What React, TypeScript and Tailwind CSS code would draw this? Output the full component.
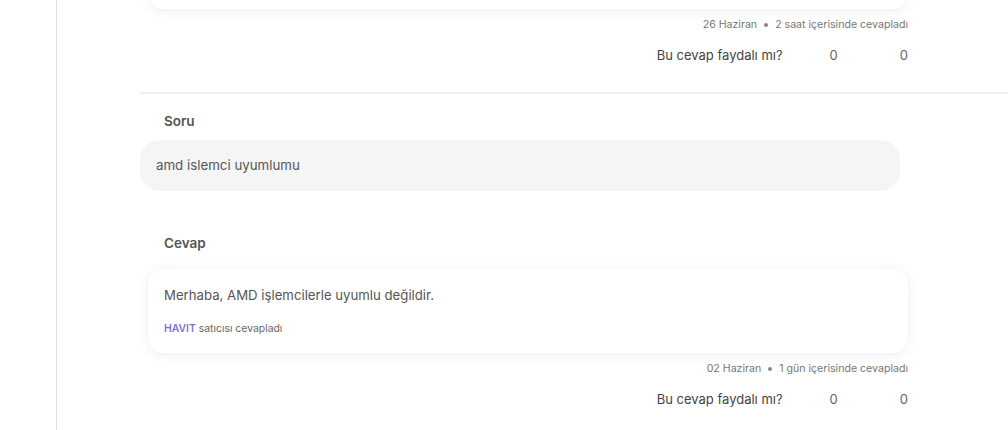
function DateLine({ date, text }: { date: string; text: string }) {
  return (
    <div className="mt-[8px] flex items-center justify-end text-[10.6px] leading-[16px] text-[#777]">
      <span>{date}</span>
      <span className="mx-[7px] inline-block h-[4px] w-[4px] rounded-full bg-[#888]" />
      <span>{text}</span>
    </div>
  );
}

function Helpful() {
  return (
    <div className="mt-[12px] flex items-center justify-end text-[13px] leading-[20px] text-[#444]">
      <span>Bu cevap faydalı mı?</span>
      <span className="ml-[47px] text-[#666]">0</span>
      <span className="ml-[62px] text-[#666]">0</span>
    </div>
  );
}

export default function App() {
  return (
    <div
      className="flex h-[430px] overflow-hidden bg-white text-[#4a4a4a]"
      style={{ fontFamily: "Inter, 'Noto Sans', sans-serif" }}
    >
      <div className="w-[56px] shrink-0" />
      <div className="flex-1 border-l border-[#e2e2e2] pl-[83px]">
        <div className="ml-[8px] w-[760px]">
          <div className="mt-[-51px] h-[60px] rounded-[16px] bg-white shadow-[0_2px_12px_rgba(0,0,0,0.07)]" />
          <DateLine date="26 Haziran" text="2 saat içerisinde cevapladı" />
          <Helpful />
        </div>

        <div className="mt-[27px] h-[2px] bg-[#f0f0f0]" />

        <div className="mt-[17px] pl-[24px] text-[13.5px] font-semibold leading-[20px] text-[#555]">Soru</div>
        <div className="mt-[9px] flex h-[51px] w-[760px] items-center rounded-[20px] bg-[#f5f5f5] px-[16px] text-[13.3px] text-[#555]">
          amd islemci uyumlumu
        </div>

        <div className="mt-[42px] pl-[24px] text-[13.5px] font-semibold leading-[20px] text-[#555]">Cevap</div>
        <div className="ml-[8px] w-[760px]">
          <div className="mt-[16px] rounded-[16px] bg-white px-[16px] pb-[16px] pt-[16px] shadow-[0_2px_12px_rgba(0,0,0,0.07)]">
            <div className="text-[13.2px] leading-[20px] text-[#555]">Merhaba, AMD işlemcilerle uyumlu değildir.</div>
            <div className="mt-[16px] text-[10.4px] leading-[16px] text-[#666]">
              <span className="font-semibold text-[#7b70dc]">HAVIT</span> satıcısı cevapladı
            </div>
          </div>
          <DateLine date="02 Haziran" text="1 gün içerisinde cevapladı" />
          <Helpful />
        </div>
      </div>
    </div>
  );
}
